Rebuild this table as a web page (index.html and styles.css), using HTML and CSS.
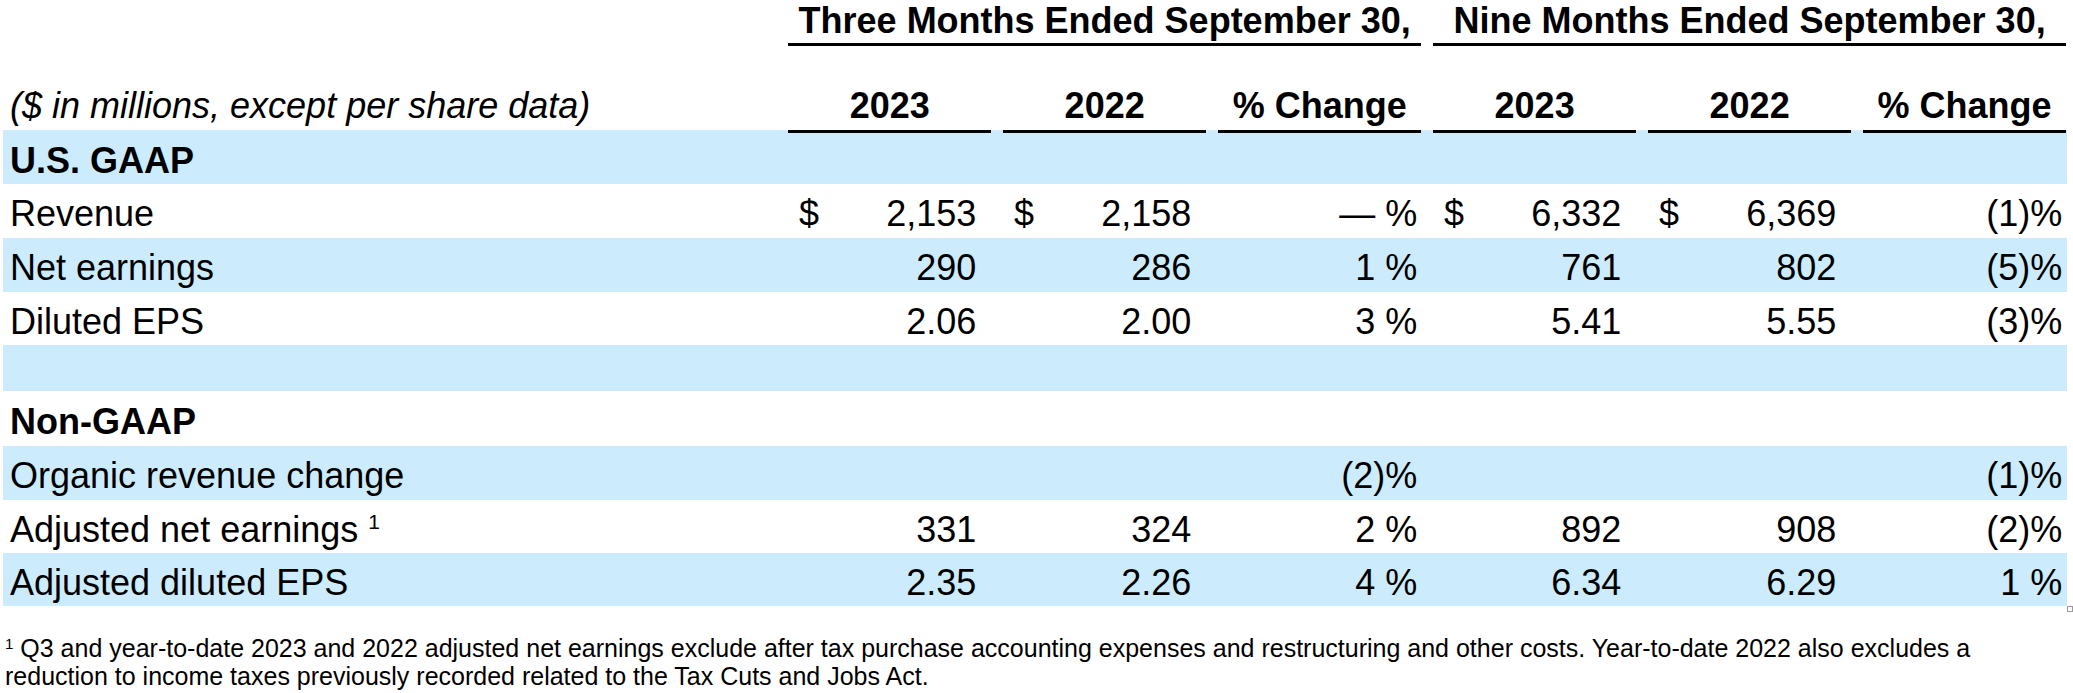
FILE: index.html
```html
<!DOCTYPE html>
<html lang="en">
<head>
<meta charset="utf-8">
<title>Financial summary</title>
<link rel="stylesheet" href="styles.css">
</head>
<body>
<div class="sheet">
  <div class="row row-group">
    <div></div>
    <div class="grp">Three Months Ended September 30,</div>
    <div class="grp">Nine Months Ended September 30,</div>
  </div>
  <div class="row row-head">
    <div class="units">($ in millions, except per share data)</div>
    <div class="ch">2023</div>
    <div class="ch">2022</div>
    <div class="ch">% Change</div>
    <div class="ch">2023</div>
    <div class="ch">2022</div>
    <div class="ch">% Change</div>
  </div>
  <div class="row row-section blue">
    <div class="lab sec">U.S. GAAP</div>
    <div class="rule"></div><div class="rule"></div><div class="rule"></div>
    <div class="rule"></div><div class="rule"></div><div class="rule"></div>
  </div>
  <div class="row row-data h54">
    <div class="lab">Revenue</div>
    <div class="num"><span>$</span><span>2,153</span></div>
    <div class="num"><span>$</span><span>2,158</span></div>
    <div class="pct">— %</div>
    <div class="num"><span>$</span><span>6,332</span></div>
    <div class="num"><span>$</span><span>6,369</span></div>
    <div class="pct">(1)%</div>
  </div>
  <div class="row row-data h54 blue">
    <div class="lab">Net earnings</div>
    <div class="num"><span></span><span>290</span></div>
    <div class="num"><span></span><span>286</span></div>
    <div class="pct">1 %</div>
    <div class="num"><span></span><span>761</span></div>
    <div class="num"><span></span><span>802</span></div>
    <div class="pct">(5)%</div>
  </div>
  <div class="row row-data h53">
    <div class="lab">Diluted EPS</div>
    <div class="num"><span></span><span>2.06</span></div>
    <div class="num"><span></span><span>2.00</span></div>
    <div class="pct">3 %</div>
    <div class="num"><span></span><span>5.41</span></div>
    <div class="num"><span></span><span>5.55</span></div>
    <div class="pct">(3)%</div>
  </div>
  <div class="row row-empty blue"></div>
  <div class="row row-data h55">
    <div class="lab sec">Non-GAAP</div>
  </div>
  <div class="row row-data h54 blue">
    <div class="lab">Organic revenue change</div>
    <div></div>
    <div></div>
    <div class="pct">(2)%</div>
    <div></div>
    <div></div>
    <div class="pct">(1)%</div>
  </div>
  <div class="row row-data h53">
    <div class="lab">Adjusted net earnings <span class="sup">1</span></div>
    <div class="num"><span></span><span>331</span></div>
    <div class="num"><span></span><span>324</span></div>
    <div class="pct">2 %</div>
    <div class="num"><span></span><span>892</span></div>
    <div class="num"><span></span><span>908</span></div>
    <div class="pct">(2)%</div>
  </div>
  <div class="row row-data h53 blue">
    <div class="lab">Adjusted diluted EPS</div>
    <div class="num"><span></span><span>2.35</span></div>
    <div class="num"><span></span><span>2.26</span></div>
    <div class="pct">4 %</div>
    <div class="num"><span></span><span>6.34</span></div>
    <div class="num"><span></span><span>6.29</span></div>
    <div class="pct">1 %</div>
  </div>
  <div class="handle"></div>
</div>
<p class="note"><span class="note-sup">1</span> Q3 and year-to-date 2023 and 2022 adjusted net earnings exclude after tax purchase accounting expenses and restructuring and other costs. Year-to-date 2022 also excludes a reduction to income taxes previously recorded related to the Tax Cuts and Jobs Act.</p>
</body>
</html>
```
FILE: styles.css
```css
html, body {
  margin: 0;
  padding: 0;
  background: #ffffff;
}

body {
  font-family: "Liberation Sans", Arial, sans-serif;
  color: #000000;
}

.sheet {
  position: relative;
  margin-left: 3px;
  width: 2064px;
  font-size: 36px;
}

.row {
  display: grid;
  grid-template-columns: 773.4px repeat(6, 203.4px);
  column-gap: 11.6px;
  align-items: center;
}

.row > div {
  line-height: 41px;
  white-space: nowrap;
}

.blue {
  background: #ccecfd;
}

/* group header row */
.row-group {
  height: 45px;
  align-items: end;
}

.grp {
  grid-column: span 3;
  text-align: center;
  font-weight: bold;
  border-bottom: 3px solid #000;
  padding-bottom: 2px;
}

/* column header row */
.row-head {
  height: 85px;
  align-items: end;
}

.row-head > div {
  padding-bottom: 4px;
}

.units {
  font-style: italic;
  padding-left: 7px;
}

.ch {
  text-align: center;
  font-weight: bold;
}

/* section header with rules */
.row-section {
  height: 54px;
}

.row-section .rule {
  align-self: start;
  height: 0;
  border-top: 3px solid #000;
}

.row-section .lab {
  padding-top: 6px;
}

.row-data > div {
  padding-top: 5px;
}

.lab {
  padding-left: 7px;
}

.sec {
  font-weight: bold;
}

.h53 { height: 53px; }
.h54 { height: 54px; }
.h55 { height: 55px; }

.row-empty {
  height: 46px;
}

.num {
  display: flex;
  justify-content: space-between;
  padding-left: 11px;
  padding-right: 15px;
}

.pct {
  text-align: right;
  padding-right: 4px;
}

.sup {
  display: inline-block;
  font-size: 21px;
  line-height: 21px;
  vertical-align: top;
  margin-top: 2px;
}

.handle {
  position: absolute;
  left: 2064px;
  bottom: -6px;
  width: 4px;
  height: 4px;
  border: 1px solid #9a9a9a;
  background: #fff;
}

.note {
  margin: 28px 0 0 0;
  padding-left: 5px;
  font-size: 25px;
  line-height: 28px;
}

.note-sup {
  display: inline-block;
  font-size: 15px;
  line-height: 15px;
  vertical-align: top;
  margin-top: 2px;
}
```
